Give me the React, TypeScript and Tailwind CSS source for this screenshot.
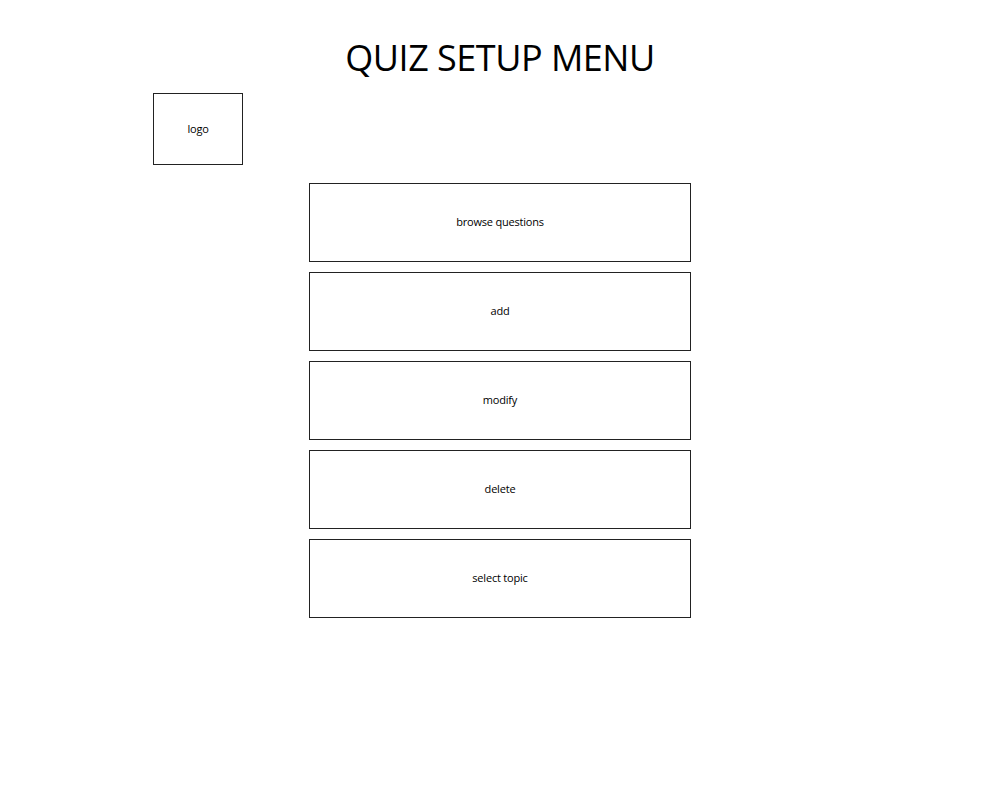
const items = ["browse questions", "add", "modify", "delete", "select topic"];

export default function App() {
  return (
    <div
      className="w-[1000px] h-[800px] bg-white text-black"
      style={{ fontFamily: '"Open Sans", "Noto Sans", sans-serif' }}
    >
      <h1 className="pt-[35px] text-center text-[36px] leading-[46px] tracking-[-0.5px]">
        QUIZ SETUP MENU
      </h1>
      <div className="mt-[12px] ml-[153px] w-[90px] h-[72px] border border-[#222] flex items-center justify-center text-[11px] tracking-[-0.2px]">
        logo
      </div>
      <div className="mt-[18px] mx-auto w-[382px] flex flex-col gap-[10px]">
        {items.map((label) => (
          <div
            key={label}
            className="h-[79px] border border-[#222] flex items-center justify-center text-[11px] tracking-[-0.2px]"
          >
            {label}
          </div>
        ))}
      </div>
    </div>
  );
}
